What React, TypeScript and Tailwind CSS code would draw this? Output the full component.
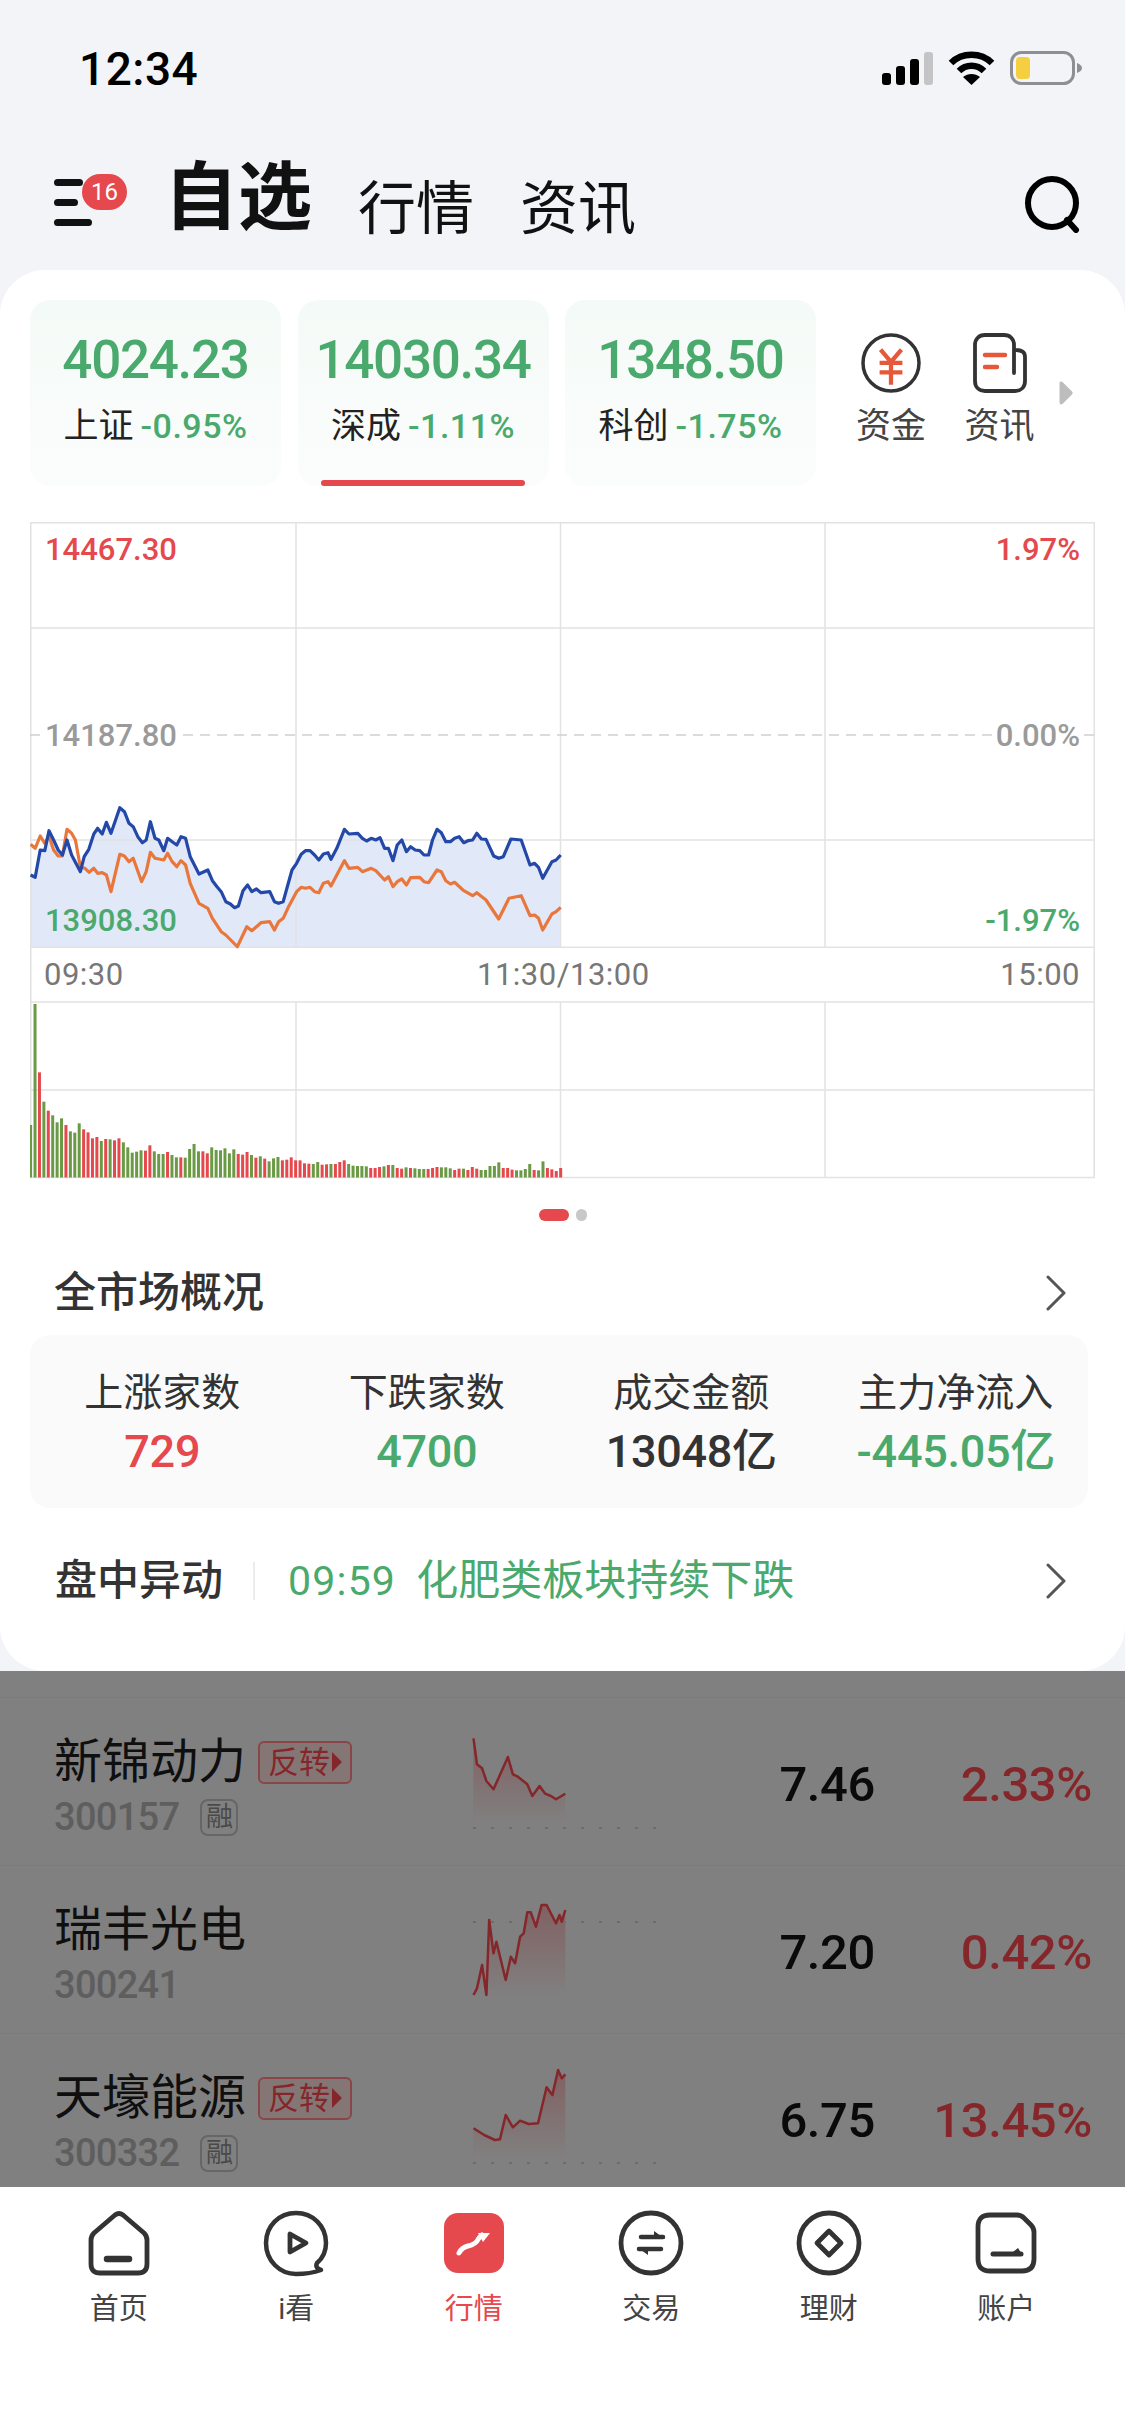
import React from "react";

const blue: number[][] = [[80,345],[92,352],[105,270],[117,272],[128,212],[140,240],[152,270],[163,285],[175,240],[187,285],[210,335],[220,290],[232,268],[245,222],[255,205],[267,222],[278,187],[290,220],[313,143],[325,155],[337,190],[348,200],[360,230],[372,248],[382,240],[393,185],[405,235],[415,240],[428,272],[438,235],[450,245],[462,255],[473,230],[485,235],[497,290],[520,342],[543,330],[555,362],[567,380],[578,395],[590,425],[602,432],[613,443],[623,438],[635,392],[647,375],[658,395],[670,387],[682,398],[705,395],[717,425],[728,430],[740,425],[752,375],[763,330],[775,310],[787,283],[798,272],[810,272],[822,285],[833,300],[845,282],[857,278],[865,298],[880,265],[900,208],[912,222],[935,220],[947,235],[958,243],[970,235],[982,240],[993,233],[1005,265],[1015,265],[1027,302],[1038,255],[1050,240],[1062,275],[1073,260],[1085,270],[1097,272],[1108,285],[1120,285],[1130,240],[1142,208],[1153,218],[1165,245],[1177,245],[1188,235],[1200,230],[1212,248],[1223,242],[1235,240],[1246,220],[1258,237],[1270,238],[1290,288],[1303,295],[1315,290],[1335,237],[1362,240],[1385,315],[1397,310],[1407,322],[1418,355],[1442,305],[1453,300],[1465,285]];
const orange: number[][] = [[80,253],[92,265],[105,228],[117,250],[128,228],[140,270],[152,288],[163,288],[175,208],[187,220],[197,240],[210,322],[222,325],[233,337],[245,325],[255,340],[267,338],[278,345],[290,395],[313,283],[325,288],[337,305],[348,295],[370,365],[382,335],[393,277],[405,295],[428,300],[438,280],[450,305],[462,320],[473,302],[485,315],[497,370],[520,430],[543,445],[555,475],[578,515],[590,525],[620,560],[645,500],[658,512],[682,488],[705,485],[717,510],[728,485],[740,475],[752,445],[775,395],[787,382],[798,385],[810,382],[822,395],[833,398],[845,370],[857,365],[865,378],[880,345],[900,302],[912,325],[935,322],[947,335],[970,325],[982,332],[1005,360],[1015,350],[1027,380],[1038,365],[1050,357],[1062,375],[1073,353],[1097,352],[1108,365],[1120,368],[1142,330],[1153,335],[1165,362],[1177,372],[1188,367],[1212,392],[1235,407],[1246,398],[1270,420],[1303,477],[1330,415],[1362,407],[1385,467],[1397,465],[1407,475],[1418,510],[1442,462],[1453,455],[1465,442]];
const barsRaw = "g435 g72 r277 g365 r392 g406 g427 g415 r435 g454 g458 g430 r448 r457 r475 r471 g483 r477 g478 r481 r475 g487 g502 g518 g515 g511 r512 r496 g514 g522 g522 r516 g525 g532 r532 g533 g507 g492 g514 r514 r520 g502 g510 g511 g505 g520 g508 r522 r524 r516 g525 r533 g529 r536 g544 g535 g531 r541 r539 r532 r541 r541 r550 r551 g552 g546 r554 r553 g552 r552 r546 r541 g552 g557 g558 g558 g559 r564 r564 r561 g559 r555 g555 r564 r566 g562 r564 g565 g567 g567 r567 r564 r561 g562 g562 g565 r570 r566 g566 r570 r561 r566 g570 g570 g558 g558 g547 r564 r564 r569 g571 g571 g567 g552 r570 g571 g544 r564 r568 r573 r564";
const bars = barsRaw.split(" ").map((s, i) => ({ red: s[0] === "r", top: Number(s.slice(1)), x: i * (1385 / 120) + 80 }));

const cx = (u: number) => u / 2.613 - 30;
const cy = (v: number) => 760 + v / 3 - 522;
const toPts = (a: number[][]) => a.map(([u, v]) => `${cx(u).toFixed(1)},${cy(v).toFixed(1)}`).join(" ");

function Chart() {
  const grid = "#e2e2e2";
  const area = `${toPts(blue)} 531,425 0,425`;
  return (
    <div className="relative mx-[30px] h-[657px] w-[1065px]">
      <svg width="1065" height="657" viewBox="0 0 1065 657" className="block">
        <polygon points={area} fill="#e1e8f8" />
        <g stroke={grid} strokeWidth="1.5" fill="none">
          <rect x="0.75" y="0.75" width="1063.5" height="424.5" />
          <line x1="0" y1="106" x2="1065" y2="106" />
          <line x1="0" y1="318" x2="1065" y2="318" />
          <line x1="266" y1="0" x2="266" y2="425" />
          <line x1="530.5" y1="0" x2="530.5" y2="425" />
          <line x1="795" y1="0" x2="795" y2="425" />
          <line x1="0.75" y1="425" x2="0.75" y2="656" />
          <line x1="1064.25" y1="425" x2="1064.25" y2="656" />
          <line x1="0" y1="480" x2="1065" y2="480" />
          <line x1="0" y1="568" x2="1065" y2="568" />
          <line x1="0" y1="655.5" x2="1065" y2="655.5" />
          <line x1="266" y1="480" x2="266" y2="656" />
          <line x1="530.5" y1="480" x2="530.5" y2="656" />
          <line x1="795" y1="480" x2="795" y2="656" />
        </g>
        <line x1="0" y1="213" x2="1065" y2="213" stroke="#d0d0d0" strokeWidth="1.5" strokeDasharray="10 7" />
        <polyline points={toPts(orange)} fill="none" stroke="#e9773c" strokeWidth="3.2" strokeLinejoin="round" />
        <polyline points={toPts(blue)} fill="none" stroke="#2348a8" strokeWidth="3.2" strokeLinejoin="round" />
        {bars.map((b, i) => {
          const y = 980 + b.top / 3 - 522;
          return <rect key={i} x={b.x / 2.613 - 30 - 1.5} y={y} width="3" height={655.5 - y} fill={b.red ? "#e5484d" : "#6a9a45"} />;
        })}
      </svg>
      <span className="absolute left-[15px] top-[8px] text-[31px] font-medium leading-[40px] text-[#e5484d]">14467.30</span>
      <span className="absolute right-[15px] top-[8px] text-[31px] font-medium leading-[40px] text-[#e5484d]">1.97%</span>
      <span className="absolute left-[15px] top-[194px] bg-white text-[31px] font-medium leading-[40px] text-[#9a9a9a]">14187.80</span>
      <span className="absolute right-[15px] top-[194px] bg-white text-[31px] font-medium leading-[40px] text-[#9a9a9a]">0.00%</span>
      <span className="absolute left-[15px] top-[379px] text-[31px] font-medium leading-[40px] text-[#4aa96c]">13908.30</span>
      <span className="absolute right-[15px] top-[379px] text-[31px] font-medium leading-[40px] text-[#4aa96c]">-1.97%</span>
      <span className="absolute left-[14px] top-[433px] text-[31px] leading-[40px] tracking-[0.5px] text-[#777]">09:30</span>
      <span className="absolute left-[447px] top-[433px] text-[31px] leading-[40px] tracking-[0.5px] text-[#777]">11:30/13:00</span>
      <span className="absolute right-[15px] top-[433px] text-[31px] leading-[40px] tracking-[0.5px] text-[#777]">15:00</span>
    </div>
  );
}

function Chevron() {
  return (
    <svg width="22" height="36" viewBox="0 0 22 36" fill="none" className="shrink-0">
      <path d="M3 2 L19 18 L3 34" stroke="#555" strokeWidth="3" strokeLinecap="round" strokeLinejoin="round" />
    </svg>
  );
}

function StatusBar() {
  return (
    <div className="flex h-[138px] items-center justify-between pl-[79px] pr-[43px]">
      <span className="text-[46px] font-medium leading-[50px] tracking-[0.5px] text-black">12:34</span>
      <svg width="200" height="36" viewBox="0 0 200 36" fill="none">
        <rect x="0" y="22" width="9" height="12" rx="3" fill="#000" />
        <rect x="14" y="15" width="9" height="19" rx="3" fill="#000" />
        <rect x="28" y="8" width="9" height="26" rx="3" fill="#000" />
        <rect x="42" y="1" width="9" height="33" rx="3" fill="#c4c4c6" />
        <path d="M69 12 C80 1 99 1 110 12" stroke="#000" strokeWidth="6.5" />
        <path d="M77 20 C84 13 95 13 102 20" stroke="#000" strokeWidth="6.5" />
        <path d="M89.5 34 L81 26 C86 22 93 22 98 26 Z" fill="#000" />
        <rect x="129.5" y="1.5" width="62" height="31" rx="10" stroke="#8e8e93" strokeWidth="3" />
        <rect x="134" y="6" width="14" height="22" rx="4" fill="#f5cf3f" />
        <path d="M195 12 C198 13 200 15 200 17 C200 19 198 21 195 22 Z" fill="#8e8e93" />
      </svg>
    </div>
  );
}

function Header() {
  return (
    <div className="flex h-[132px] items-start pl-[54px] pr-[42px] pt-[20px] text-[#111]">
      <div className="relative h-[50px] w-[110px] shrink-0">
        <span className="absolute left-0 top-[21px] h-[7px] w-[29px] rounded-full bg-[#111]" />
        <span className="absolute left-0 top-[41px] h-[7px] w-[24px] rounded-full bg-[#111]" />
        <span className="absolute left-0 top-[61px] h-[7px] w-[38px] rounded-full bg-[#111]" />
        <span className="absolute left-[28px] top-[16px] flex h-[36px] w-[45px] items-center justify-center rounded-full bg-[#e5484d] text-[24px] leading-none text-white">16</span>
      </div>
      <span className="text-[74px] font-bold leading-[80px]">自选</span>
      <span className="ml-[46px] mt-[19px] text-[58px] leading-[64px]">行情</span>
      <span className="ml-[46px] mt-[19px] text-[58px] leading-[64px]">资讯</span>
      <svg width="60" height="60" viewBox="0 0 60 60" fill="none" className="ml-auto mt-[15px]">
        <circle cx="29" cy="30" r="24" stroke="#000" strokeWidth="6" />
        <path d="M44 47 L53 57" stroke="#000" strokeWidth="6" strokeLinecap="round" />
      </svg>
    </div>
  );
}

function StatTab({ num, name, pct, active }: { num: string; name: string; pct: string; active?: boolean }) {
  return (
    <div className="relative flex h-[186px] w-[251px] shrink-0 flex-col items-center rounded-[20px] bg-gradient-to-b from-[#f4faf7] to-[#fbfdfc] pt-[30px]">
      <span className="whitespace-nowrap text-[53px] font-medium leading-[60px] tracking-[-1.3px] text-[#4aa96c]">{num}</span>
      <span className="mt-[14px] whitespace-nowrap text-[35px] leading-[44px] text-[#222]">
        {name}
        <span className="ml-[7px] text-[34px] font-medium tracking-[0.5px] text-[#4aa96c]">{pct}</span>
      </span>
      {active && <span className="absolute bottom-0 left-[23px] h-[6px] w-[204px] rounded-[3px] bg-[#e5484d]" />}
    </div>
  );
}

function StatTabs() {
  return (
    <div className="flex pl-[30px] pt-[30px]">
      <div className="flex gap-[16.5px]">
        <StatTab num="4024.23" name="上证" pct="-0.95%" />
        <StatTab num="14030.34" name="深成" pct="-1.11%" active />
        <StatTab num="1348.50" name="科创" pct="-1.75%" />
      </div>
      <div className="ml-[41px] flex w-[68px] flex-col items-center pt-[33px]">
        <svg width="60" height="60" viewBox="0 0 60 60" fill="none">
          <circle cx="30" cy="30" r="28" stroke="#333" strokeWidth="3.5" />
          <path d="M19 17 L30 30 L41 17 M18 31 H42 M18 41 H42 M30 30 V54" stroke="#e5593a" strokeWidth="4.5" transform="translate(0 -1) translate(30 30) scale(0.95) translate(-30 -30)" />
        </svg>
        <span className="mt-[12px] whitespace-nowrap text-[35px] leading-[44px] text-[#444]">资金</span>
      </div>
      <div className="ml-[40px] flex w-[69px] flex-col items-center pt-[33px]">
        <svg width="56" height="60" viewBox="0 0 56 60" fill="none">
          <path d="M42 40 V12 C42 6 38 2 32 2 H13 C7 2 3 6 3 12 V48 C3 54 7 58 13 58 H43 C49 58 53 54 53 48 V24 C53 19 50 17 43 17" stroke="#333" strokeWidth="3.8" strokeLinecap="round" />
          <path d="M13 22 H33 M13 34 H25" stroke="#e5593a" strokeWidth="4.5" strokeLinecap="round" />
        </svg>
        <span className="mt-[12px] whitespace-nowrap text-[35px] leading-[44px] text-[#444]">资讯</span>
      </div>
      <svg width="17" height="24" viewBox="0 0 16 24" className="ml-[23px] mt-[81px]">
        <path d="M2 3 C2 0 4 0 6 2 L14 10 C15.500 11.500 15.500 12.500 14 14 L6 22 C4 24 2 24 2 21 Z" fill="#bdbdbd" />
      </svg>
    </div>
  );
}

function Metric({ label, value, color }: { label: string; value: string; color: string }) {
  return (
    <div className="flex flex-col items-center">
      <span className="whitespace-nowrap text-[39px] leading-[50px] text-[#333]">{label}</span>
      <span className={`mt-[4px] whitespace-nowrap text-[45px] font-medium leading-[60px] tracking-[-0.3px] ${color}`}>{value}</span>
    </div>
  );
}

function Card() {
  return (
    <div className="h-[1401px] shrink-0 rounded-[45px] bg-white">
      <StatTabs />
      <div className="mt-[36px]">
        <Chart />
      </div>
      <div className="mt-[30px] flex h-[12px] justify-center gap-[7px] pl-[1px]">
        <span className="h-[12px] w-[30px] rounded-full bg-[#e5484d]" />
        <span className="h-[12px] w-[11px] rounded-full bg-[#c8c8c8]" />
      </div>
      <div className="flex h-[114px] items-center justify-between pl-[54px] pr-[58px] pt-[30px]">
        <span className="text-[42px] font-medium leading-[50px] text-[#333]">全市场概况</span>
        <Chevron />
      </div>
      <div className="mx-[30px] grid h-[173px] w-[1058px] grid-cols-4 rounded-[20px] bg-[#fafafa] pt-[33px]">
        <Metric label="上涨家数" value="729" color="text-[#e5484d]" />
        <Metric label="下跌家数" value="4700" color="text-[#4aa96c]" />
        <Metric label="成交金额" value="13048亿" color="text-[#333]" />
        <Metric label="主力净流入" value="-445.05亿" color="text-[#4aa96c]" />
      </div>
      <div className="flex h-[146px] items-center pl-[55px] pr-[58px]">
        <span className="text-[42px] font-medium leading-[50px] text-[#333]">盘中异动</span>
        <span className="ml-[30px] h-[38px] w-[2px] bg-[#ececec]" />
        <span className="ml-[33px] text-[41px] leading-[50px] tracking-[1.2px] text-[#4aa96c]">09:59</span>
        <span className="ml-[20px] text-[42px] leading-[50px] text-[#4aa96c]">化肥类板块持续下跌</span>
        <span className="ml-auto flex">
          <Chevron />
        </span>
      </div>
    </div>
  );
}

type RowProps = {
  name: string;
  code: string;
  price: string;
  pct: string;
  tag?: boolean;
  rong?: boolean;
  line: number[][];
  offset: number;
  dotY: number;
  base: number;
  id: string;
};

function Spark({ line, offset, dotY, base, id }: { line: number[][]; offset: number; dotY: number; base: number; id: string }) {
  const pts = line.map(([u, v]) => [u / 1.394 - 473, 1680 + v / 3 - offset]);
  const p = pts.map(([x, y]) => `${x.toFixed(1)},${y.toFixed(1)}`).join(" ");
  const last = pts[pts.length - 1][0];
  return (
    <svg width="187" height="168" viewBox="0 0 187 168" fill="none" className="shrink-0 overflow-visible">
      <defs>
        <linearGradient id={id} x1="0" y1="0" x2="0" y2="1">
          <stop offset="0" stopColor="#85262b" stopOpacity="0.35" />
          <stop offset="1" stopColor="#85262b" stopOpacity="0" />
        </linearGradient>
      </defs>
      <polygon points={`${p} ${last},${base} 0,${base}`} fill={`url(#${id})`} />
      <line x1="0" y1={dotY} x2="187" y2={dotY} stroke="#6c6c6c" strokeWidth="2" strokeDasharray="3 15" />
      <polyline points={p} stroke="#85262b" strokeWidth="2.5" strokeLinejoin="round" />
    </svg>
  );
}

function Row({ name, code, price, pct, tag, rong, line, offset, dotY, base, id }: RowProps) {
  return (
    <div className="flex h-[168px] shrink-0 items-start border-t border-[#7b7b7b] pl-[54px] pr-[33px]">
      <div className="w-[419px] shrink-0 pt-[36px]">
        <div className="flex h-[56px] items-center">
          <span className="text-[48px] leading-[56px] text-[#0f0f0f]">{name}</span>
          <div className={tag ? "ml-[12px] flex h-[43px] w-[94px] items-center justify-center rounded-[6px] border-2 border-[#8a4548] bg-[#857676]" : "hidden"}>
            <span className="text-[31px] leading-none text-[#85262b]">反转</span>
            <svg width="10" height="20" viewBox="0 0 10 20" className="ml-[2px]">
              <path d="M0 0 L10 10 L0 20 Z" fill="#85262b" />
            </svg>
          </div>
        </div>
        <div className="mt-[7px] flex h-[40px] items-center">
          <span className="text-[38px] font-medium leading-[40px] tracking-[-0.7px] text-[#5e5e5e]">{code}</span>
          <span className={rong ? "ml-[21px] flex h-[37px] w-[38px] items-center justify-center rounded-[8px] border-2 border-[#666] text-[27px] leading-none text-[#4a4a4a]" : "hidden"}>融</span>
        </div>
      </div>
      <Spark line={line} offset={offset} dotY={dotY} base={base} id={id} />
      <div className="flex h-[168px] flex-1 items-center justify-between pt-[5px]">
        <span className="w-[215px] text-right text-[49px] font-medium leading-[60px] tracking-[-0.4px] text-[#0a0a0a]">{price}</span>
        <span className="text-right text-[49px] font-medium leading-[60px] tracking-[-0.4px] text-[#85262b]">{pct}</span>
      </div>
    </div>
  );
}

function List() {
  return (
    <div className="min-h-0 flex-1 overflow-hidden bg-[#808080] pt-[26px]">
      <div className="flex flex-col">
        <Row
          id="s1" name="新锦动力" code="300157" price="7.46" pct="2.33%" tag rong offset={1697} dotY={130} base={125}
          line={[[660,172],[665,250],[672,262],[678,300],[688,325],[708,228],[715,280],[722,287],[735,310],[742,345],[752,315],[760,338],[768,345],[775,355],[788,338]]}
        />
        <Row
          id="s2" name="瑞丰光电" code="300241" price="7.20" pct="0.42%" offset={1866} dotY={56} base={130}
          line={[[660,945],[665,925],[672,855],[678,945],[682,720],[688,820],[692,785],[705,900],[712,830],[718,850],[725,770],[730,760],[735,697],[740,697],[747,740],[755,675],[762,675],[775,730],[780,705],[783,725],[788,690]]}
        />
        <Row
          id="s3" name="天壕能源" code="300332" price="6.75" pct="13.45%" tag rong offset={2034} dotY={129} base={125}
          line={[[660,1345],[675,1365],[690,1380],[697,1378],[705,1305],[715,1342],[725,1322],[737,1332],[750,1330],[762,1222],[770,1245],[778,1170],[783,1195],[788,1183]]}
        />
      </div>
    </div>
  );
}

const ic = "#333";

const navItems: { label: string; active?: boolean; icon: React.ReactNode }[] = [
  {
    label: "首页",
    icon: (
      <svg width="66" height="66" viewBox="0 0 66 66" fill="none">
        <path d="M29 5 Q33 2 37 5 L58 23 Q61 26 61 30 V54 Q61 63 52 63 H14 Q5 63 5 54 V30 Q5 26 8 23 Z" stroke={ic} strokeWidth="4.800" strokeLinejoin="round" />
        <path d="M21 49 H43" stroke={ic} strokeWidth="6.500" strokeLinecap="round" />
      </svg>
    ),
  },
  {
    label: "i看",
    icon: (
      <svg width="66" height="68" viewBox="0 0 66 68" fill="none">
        <path d="M54 53 C60 48 63 41 63 33 C63 16 50 3 33 3 C16 3 3 16 3 33 C3 51 17 64 33 64 C42 64 50 63 58 60 C55 59 52 57 54 53 Z" stroke={ic} strokeWidth="4.500" strokeLinejoin="round" />
        <path d="M27 24 V42 L43 33 Z" stroke={ic} strokeWidth="4.800" strokeLinejoin="round" />
      </svg>
    ),
  },
  {
    label: "行情",
    active: true,
    icon: (
      <svg width="66" height="66" viewBox="0 0 66 66" fill="none">
        <rect x="3" y="3" width="60" height="60" rx="14" fill="#e5484d" />
        <path d="M18 43 C20 39 23 37 27 36 C33 35 36 32 38 28 L41 25" stroke="#fff" strokeWidth="5" strokeLinecap="round" />
        <path d="M37 23 L49 23 L42 32 Z" fill="#fff" />
      </svg>
    ),
  },
  {
    label: "交易",
    icon: (
      <svg width="66" height="66" viewBox="0 0 66 66" fill="none">
        <circle cx="33" cy="33" r="30" stroke={ic} strokeWidth="4.800" />
        <path d="M23 27 H45 M21 39 H43" stroke={ic} strokeWidth="4.500" strokeLinecap="round" />
        <path d="M36 21 L47 29 H36 Z M30 45 L19 37 H30 Z" fill={ic} />
      </svg>
    ),
  },
  {
    label: "理财",
    icon: (
      <svg width="66" height="66" viewBox="0 0 66 66" fill="none">
        <circle cx="33" cy="33" r="30" stroke={ic} strokeWidth="4.800" />
        <path d="M33 21 L45 33 L33 45 L21 33 Z" stroke={ic} strokeWidth="4.800" strokeLinejoin="round" />
      </svg>
    ),
  },
  {
    label: "账户",
    icon: (
      <svg width="66" height="66" viewBox="0 0 66 66" fill="none">
        <path d="M17 5 H44 Q48 5 51 8 L58 15 Q61 18 61 22 V49 Q61 61 49 61 H17 Q5 61 5 49 V17 Q5 5 17 5 Z" stroke={ic} strokeWidth="4.800" strokeLinejoin="round" />
        <path d="M20 44 H48" stroke={ic} strokeWidth="5" strokeLinecap="round" />
        <path d="M40 42 L45 38 L50 46 H40 Z" fill={ic} />
      </svg>
    ),
  },
];

function Nav() {
  return (
    <div className="grid h-[249px] shrink-0 grid-cols-6 bg-white pl-[30px] pr-[30px] pt-[23px]">
      {navItems.map((n) => (
        <div key={n.label} className="flex flex-col items-center">
          <div className="flex h-[68px] items-start justify-center">{n.icon}</div>
          <span className={`mt-[13px] block text-[29px] leading-[36px] ${n.active ? "text-[#e5484d]" : "text-[#444]"}`}>{n.label}</span>
        </div>
      ))}
    </div>
  );
}

export default function App() {
  return (
    <div className="flex h-[2436px] w-[1125px] flex-col overflow-hidden bg-[#f2f4f8] font-['Roboto','Noto_Sans_CJK_SC',sans-serif]">
      <StatusBar />
      <Header />
      <Card />
      <List />
      <Nav />
    </div>
  );
}
